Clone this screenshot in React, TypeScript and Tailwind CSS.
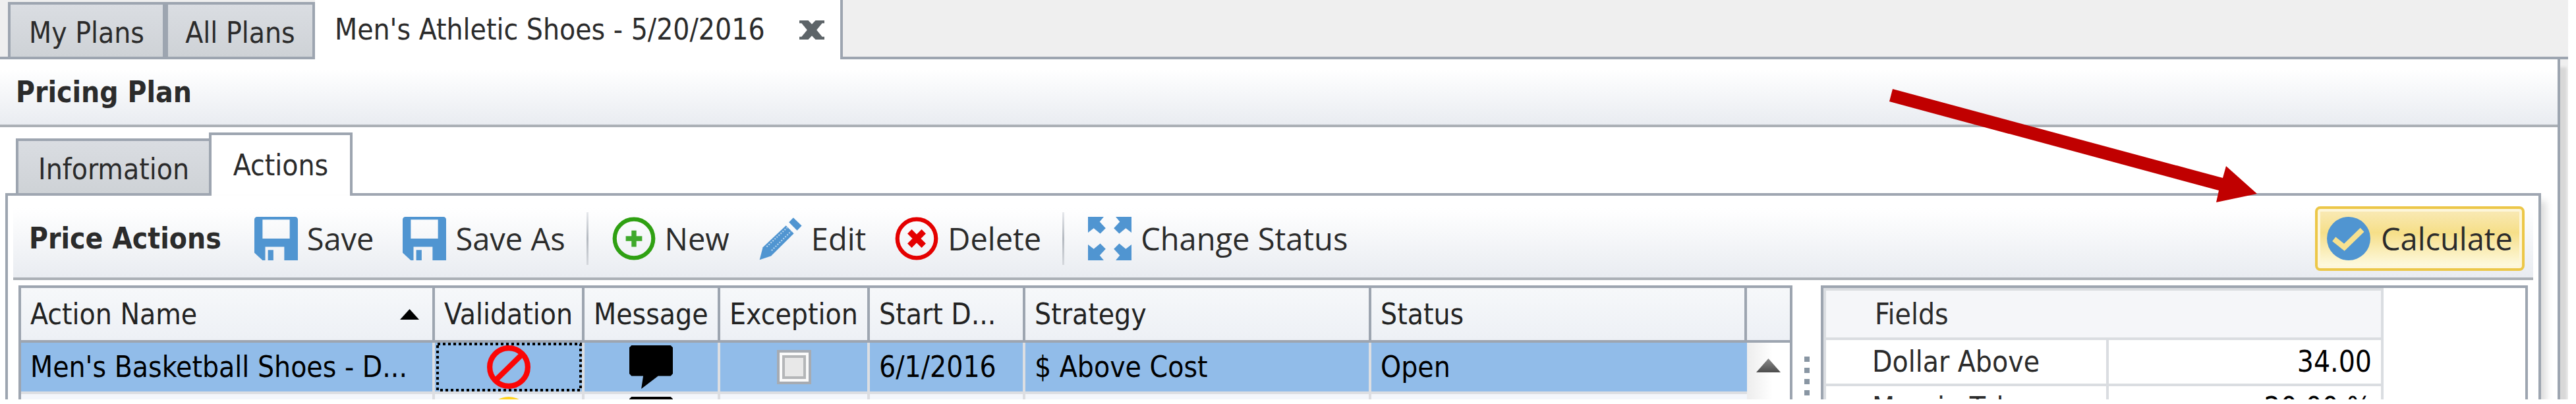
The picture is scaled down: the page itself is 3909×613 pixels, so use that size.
import type { ReactNode } from "react";

const ICON = "size-[66px] shrink-0";

function SaveIcon() {
  return (
    <svg viewBox="0 0 16 16" className={ICON} aria-hidden="true">
      <path
        fill="#5095d1"
        fillRule="evenodd"
        d="M1 0h14a1 1 0 0 1 1 1v15h-5v-5H4v5H3L0 13.2V1a1 1 0 0 1 1-1zM3 1v7h10V1z"
      />
      <path fill="#5095d1" d="M5 12.2h2V16H5z" />
    </svg>
  );
}

function NewIcon() {
  return (
    <svg viewBox="0 0 16 16" className={ICON} aria-hidden="true">
      <circle cx="8" cy="8" r="7.1" fill="none" stroke="#2fa012" strokeWidth="1.5" />
      <path d="M8 5v6M5 8h6" stroke="#3fa92b" strokeWidth="1.8" />
    </svg>
  );
}

function EditIcon() {
  return (
    <svg viewBox="0 0 16 16" className={ICON} aria-hidden="true">
      <path fill="#5095d1" d="M0.4 15.8 1.6 11.2 10.1 3.2 13 6.1 4.6 14.4z" />
      <path stroke="#b8d5ee" strokeWidth=".5" strokeDasharray=".5 .5" d="M3 11 10.6 3.9M4.8 12.4 12 5.3" />
      <path fill="#5095d1" d="M11.2 2 12.8.3 15.9 3.3 14.2 5z" />
    </svg>
  );
}

function DeleteIcon() {
  return (
    <svg viewBox="0 0 16 16" className={ICON} aria-hidden="true">
      <circle cx="8" cy="8" r="7.1" fill="none" stroke="#e40000" strokeWidth="1.5" />
      <path d="M5.4 5.4l5.2 5.2M10.6 5.4l-5.2 5.2" stroke="#e40000" strokeWidth="2.2" />
    </svg>
  );
}

function StatusIcon() {
  return (
    <svg viewBox="0 0 16 16" className={ICON} aria-hidden="true" fill="#5095d1">
      <path d="M0 0h5.800L4.300 1.800l2.200 2.400-2 2-2.400-2L0 5.800z" />
      <path d="M16 0h-5.800l1.500 1.800-2.200 2.400 2 2 2.400-2L16 5.800z" />
      <path d="M0 16h5.800l-1.500-1.800 2.200-2.400-2-2-2.400 2L0 10.200z" />
      <path d="M16 16h-5.800l1.500-1.800-2.200-2.400 2-2 2.400 2L16 10.200z" />
    </svg>
  );
}

function CheckIcon() {
  return (
    <svg viewBox="0 0 16 16" className={ICON} aria-hidden="true">
      <circle cx="8" cy="8" r="8" fill="#5095d1" />
      <path d="M2.600 8.200 6.400 11.200 13 4.800" fill="none" stroke="#f7e18f" strokeWidth="2" />
    </svg>
  );
}

function BlockedIcon() {
  return (
    <svg viewBox="0 0 16 16" className="mx-auto size-[66px]" role="img" aria-label="Invalid">
      <circle cx="8" cy="8" r="7" fill="none" stroke="#fb0606" strokeWidth="2" />
      <path d="M12.8 3.4 3.4 12.6" stroke="#fb0606" strokeWidth="2" />
    </svg>
  );
}

function WarningIcon() {
  return (
    <svg viewBox="0 0 16 16" className="mx-auto size-[66px]" role="img" aria-label="Warning">
      <circle cx="8" cy="8" r="8" fill="#ffd21f" />
    </svg>
  );
}

function MessageIcon() {
  return (
    <svg viewBox="0 0 16 16" className="mx-auto size-[66px]" role="img" aria-label="Message">
      <path d="M.8 0h14.4l.8.8v9.600l-.8.9h-4.600L4.400 16l.7-4.700H.8L0 10.400V.8z" />
    </svg>
  );
}

function ToolButton({ icon, children }: { icon: ReactNode; children: ReactNode }) {
  return (
    <button type="button" className="flex shrink-0 items-center gap-[14px] whitespace-nowrap">
      {icon}
      <span>{children}</span>
    </button>
  );
}

function Separator() {
  return (
    <div className="mr-1 h-20 w-[3px] shrink-0 bg-linear-to-b from-[#e6e8ec] via-[#b4b9c0] to-[#d5d8dd]" />
  );
}

const TH =
  "h-[83px] border-r-4 border-b-4 border-[#9da5b0] bg-linear-to-b from-[#f6f8fa] to-[#edf0f5] pl-[14px] text-left font-normal whitespace-nowrap";
const TD = "h-[78px] border-r-4 border-b-4 border-[#dcdee2] whitespace-nowrap";

function Check({ label }: { label: string }) {
  return (
    <input
      type="checkbox"
      aria-label={label}
      className="mx-auto block size-[52px] appearance-none border-4 border-[#a6abb2] bg-[#e8e8e8] shadow-[inset_0_0_0_4px_#fafafa,inset_0_0_0_8px_#b4b6b8]"
    />
  );
}

function ActionsTable() {
  return (
    <table className="w-full table-fixed border-separate border-spacing-0 text-black">
      <colgroup>
        <col className="w-[628px]" />
        <col className="w-[227px]" />
        <col className="w-[206px]" />
        <col className="w-[227px]" />
        <col className="w-[236px]" />
        <col className="w-[525px]" />
        <col />
        <col className="w-[65px]" />
      </colgroup>
      <thead className="text-[#222]">
        <tr>
          <th className={TH}>
            <div className="flex items-center justify-between pr-5">
              Action Name
              <svg viewBox="0 0 29 16" className="h-4 w-[29px]" aria-hidden="true">
                <path d="M14.500 0 29 16H0z" fill="#000" />
              </svg>
            </div>
          </th>
          <th className={TH}>Validation</th>
          <th className={TH}>Message</th>
          <th className={TH}>Exception</th>
          <th className={TH}>Start D...</th>
          <th className={TH}>Strategy</th>
          <th className={TH}>Status</th>
          <td className="border-b-4 border-[#9da5b0] bg-linear-to-b from-[#f6f8fa] to-[#edf0f5]" />
        </tr>
      </thead>
      <tbody>
        <tr className="bg-[#91bce9]">
          <td className={TD + " pl-[14px]"}>Men's Basketball Shoes - D...</td>
          <td className={TD + " relative"}>
            <svg className="absolute inset-0 size-full" aria-hidden="true">
              <rect
                x="4"
                y="2"
                width="217"
                height="70"
                fill="none"
                stroke="#000"
                strokeWidth="4"
                strokeDasharray="4 4"
              />
            </svg>
            <BlockedIcon />
          </td>
          <td className={TD}>
            <MessageIcon />
          </td>
          <td className={TD}>
            <Check label="Exception" />
          </td>
          <td className={TD + " pl-[14px]"}>6/1/2016</td>
          <td className={TD + " pl-[14px]"}>$ Above Cost</td>
          <td className="h-[78px] border-b-4 border-[#dcdee2] pl-[14px]">Open</td>
          <td rowSpan={2} className="bg-linear-to-r from-[#ededed] to-white to-60% pt-6 align-top">
            <button type="button" aria-label="Scroll up" className="mx-auto block">
              <svg viewBox="0 0 37 21" className="h-[21px] w-[37px]" aria-hidden="true">
                <defs>
                  <linearGradient id="scrollUp" x1="0" y1="0" x2="0" y2="1">
                    <stop offset="0" stopColor="#8b8b8b" />
                    <stop offset="1" stopColor="#4d4d4d" />
                  </linearGradient>
                </defs>
                <path d="M18.500 0 37 21H0z" fill="url(#scrollUp)" />
              </svg>
            </button>
          </td>
        </tr>
        <tr className="bg-[#f3f6fb]">
          <td className={TD} />
          <td className={TD}>
            <WarningIcon />
          </td>
          <td className={TD}>
            <MessageIcon />
          </td>
          <td className={TD} />
          <td className={TD} />
          <td className={TD} />
          <td className="h-[78px] border-b-4 border-[#dcdee2]" />
        </tr>
      </tbody>
    </table>
  );
}

const FD = "h-[70px] border-r-4 border-b-4 border-[#dadde1] whitespace-nowrap";

function FieldsTable() {
  return (
    <table className="w-[850px] table-fixed border-separate border-spacing-0 border-t-4 border-l-4 border-[#dadde1]">
      <colgroup>
        <col className="w-[429px]" />
        <col />
      </colgroup>
      <thead>
        <tr>
          <th
            colSpan={2}
            className="h-[75px] border-r-4 border-b-4 border-[#dadde1] bg-[#f5f6f9] pl-[74px] text-left font-normal"
          >
            Fields
          </th>
        </tr>
      </thead>
      <tbody>
        <tr>
          <td className={FD + " pl-[70px]"}>Dollar Above</td>
          <td className={FD + " pr-[14px] text-right text-black"}>34.00</td>
        </tr>
        <tr>
          <td className={FD + " pl-[70px]"}>Margin Tolerance</td>
          <td className={FD + " pr-[14px] text-right text-black"}>20.00 %</td>
        </tr>
      </tbody>
    </table>
  );
}

const TAB_OFF =
  "shrink-0 border-4 border-[#9da5b0] bg-linear-to-b from-[#dadde2] to-[#ced2d6] pt-1.5 text-center whitespace-nowrap";

export default function App() {
  return (
    <div className="relative flex h-screen flex-col overflow-hidden bg-white pr-3 pb-[7px] font-['DejaVu_Sans_Condensed','DejaVu_Sans',sans-serif] text-[44px] leading-[52px] text-[#2b2b2b]">
      <div className="flex min-h-0 flex-1 flex-col overflow-hidden bg-[#efefef]">
        <nav className="flex h-[90px] shrink-0 items-end" aria-label="Open plans">
          <div className="h-full w-3 shrink-0 border-b-4 border-[#9da5b0]" />
          <button type="button" className={TAB_OFF + " h-[87px] w-[239px]"}>
            My Plans
          </button>
          <button type="button" className={TAB_OFF + " h-[87px] w-[227px]"}>
            All Plans
          </button>
          <div className="flex h-full shrink-0 items-center gap-[52px] border-r-4 border-[#9da5b0] bg-white pr-6 pl-[30px]">
            <button type="button" className="whitespace-nowrap">
              Men's Athletic Shoes - 5/20/2016
            </button>
            <button type="button" aria-label="Close tab">
              <svg viewBox="0 0 9 7" className="h-[29px] w-[38px]" preserveAspectRatio="none" aria-hidden="true">
                <path
                  fill="#5d6468"
                  d="M0 0h3.200l1.300 1.400L5.800 0H9v1H8.200L6.200 3.500 8.200 6H9v1H5.800L4.500 5.600 3.200 7H0V6h.8l2-2.500L.8 1H0z"
                />
              </svg>
            </button>
          </div>
          <div className="h-full flex-1 border-b-4 border-[#9da5b0]" />
        </nav>

        <main className="mr-3 flex min-h-0 flex-1 flex-col border-r-4 border-[#9da5b0] bg-white shadow-[10px_12px_4px_#d8d8d8]">
          <h1 className="flex h-[103px] shrink-0 items-center border-b-4 border-[#abb0b6] bg-linear-to-b from-white from-15% to-[#e9ecf1] pl-6 font-bold">
            Pricing Plan
          </h1>

          <nav className="mr-[25px] ml-2 flex h-[104px] shrink-0 items-end pt-2" aria-label="Plan sections">
            <div className="w-4 shrink-0 border-b-4 border-[#9da5b0]" />
            <button type="button" className={TAB_OFF + " h-[87px] w-[293px] border-r-0"}>
              Information
            </button>
            <button
              type="button"
              className="h-full w-[218px] shrink-0 border-4 border-b-0 border-[#9da5b0] bg-white"
            >
              Actions
            </button>
            <div className="flex-1 border-b-4 border-[#9da5b0]" />
          </nav>

          <section className="mr-[25px] ml-2 flex min-h-0 flex-1 flex-col border-x-4 border-[#9da5b0] bg-white shadow-[8px_8px_10px_#dedede]">
            <div className="mx-2 flex h-[128px] shrink-0 items-center border-b-4 border-[#abb0b6] bg-linear-to-b from-white from-15% to-[#e9ecf1] pt-1.5 pr-[13px] pl-6">
              <h2 className="mr-[50px] font-bold whitespace-nowrap">Price Actions</h2>
              <div className="flex items-center gap-8 font-['Open_Sans','Noto_Sans',sans-serif] text-[47px]">
                <div className="flex items-center gap-11">
                  <ToolButton icon={<SaveIcon />}>Save</ToolButton>
                  <ToolButton icon={<SaveIcon />}>Save As</ToolButton>
                </div>
                <Separator />
                <div className="flex items-center gap-11">
                  <ToolButton icon={<NewIcon />}>New</ToolButton>
                  <ToolButton icon={<EditIcon />}>Edit</ToolButton>
                  <ToolButton icon={<DeleteIcon />}>Delete</ToolButton>
                </div>
                <Separator />
                <ToolButton icon={<StatusIcon />}>Change Status</ToolButton>
              </div>
              <button
                type="button"
                className="ml-auto flex h-[98px] shrink-0 items-center gap-4 rounded-lg border-4 border-[#ecc748] bg-linear-to-b from-[#f9eab8] via-[#f6df88] via-40% to-[#fefbe4] px-[14px] font-['Open_Sans','Noto_Sans',sans-serif] text-[47px] shadow-[inset_0_0_0_4px_#fdf6da]"
              >
                <CheckIcon />
                <span>Calculate</span>
              </button>
            </div>

            <div className="flex min-h-0 flex-1 overflow-hidden px-4 pt-2">
              <div className="min-w-0 flex-1 overflow-hidden border-4 border-b-0 border-[#9da5b0]">
                <ActionsTable />
              </div>
              <div className="flex w-[43px] shrink-0 flex-col items-center gap-[9px] pt-[108px]" role="separator">
                <span className="size-2 bg-[#8996a3]" />
                <span className="size-2 bg-[#8996a3]" />
                <span className="size-2 bg-[#8996a3]" />
                <span className="size-2 bg-[#8996a3]" />
              </div>
              <div className="w-[1073px] shrink-0 overflow-hidden border-4 border-b-0 border-[#9da5b0]">
                <FieldsTable />
              </div>
            </div>
          </section>
        </main>
      </div>

      <svg
        viewBox="0 0 558 172"
        className="pointer-events-none absolute top-[135px] right-[484px] h-[172px] w-[558px]"
        aria-hidden="true"
      >
        <path fill="#c00000" d="M5 0 506 135 511 117 558 159 496 172 500 154 0 19z" />
      </svg>
    </div>
  );
}
